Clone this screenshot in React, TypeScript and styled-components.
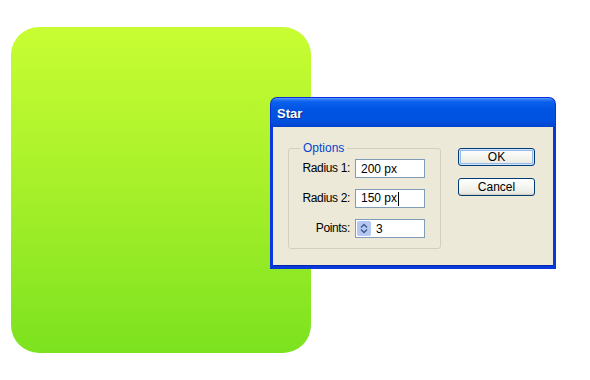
import React from "react";
import styled, { createGlobalStyle } from "styled-components";

const Global = createGlobalStyle`
  html, body { margin: 0; padding: 0; background: #ffffff; }
  body { font-family: "Liberation Sans", Arial, sans-serif; }
`;

const Page = styled.div`
  position: relative;
  width: 590px;
  height: 380px;
  padding: 27px 0 0 11px;
  box-sizing: border-box;
  background: #ffffff;
  overflow: hidden;
`;

const Card = styled.div`
  width: 300px;
  height: 326px;
  border-radius: 28px;
  background: linear-gradient(180deg, #c8fd33 0%, #a6f02a 50%, #7ce21f 100%);
`;

const Dialog = styled.div`
  position: absolute;
  left: 270px;
  top: 97px;
  width: 286px;
  height: 172px;
  display: flex;
  flex-direction: column;
  box-sizing: border-box;
`;

const TitleBar = styled.div`
  height: 30px;
  flex: none;
  box-sizing: border-box;
  border-radius: 7px 7px 0 0;
  border: 1px solid #0831d9;
  border-bottom: none;
  background: linear-gradient(
    180deg,
    #5d9bff 0%,
    #2a78f6 6%,
    #0a5fec 14%,
    #0054e3 40%,
    #0053e0 75%,
    #0049d6 92%,
    #0042c8 100%
  );
  display: flex;
  align-items: center;
  padding: 0 0 0 6px;
`;

const Title = styled.span`
  color: #ffffff;
  font-family: "Liberation Sans", Arial, sans-serif;
  font-weight: bold;
  font-size: 13px;
  text-shadow: 1px 1px 0 #0a2a8a;
  margin-top: 1px;
`;

const Client = styled.div`
  flex: 1;
  background: #ece9d8;
  border: 3px solid #0839d9;
  border-top: none;
  display: flex;
  align-items: flex-start;
  padding: 21px 0 0 15px;
  gap: 17px;
  box-shadow: inset 0 -1px 0 #0025b0;
`;

const GroupBox = styled.div`
  position: relative;
  width: 153px;
  height: 101px;
  box-sizing: border-box;
  border: 1px solid #d0d0bf;
  border-radius: 3px;
  display: grid;
  grid-template-columns: 61px 70px;
  grid-auto-rows: 19px;
  column-gap: 5px;
  row-gap: 11px;
  padding: 10px 0 0 0;
  align-content: start;
`;

const Legend = styled.span`
  position: absolute;
  left: 11px;
  top: -8px;
  padding: 0 3px;
  background: #ece9d8;
  color: #0046d5;
  font-size: 12px;
  line-height: 14px;
`;

const Label = styled.label`
  font-size: 12px;
  color: #000000;
  text-align: right;
  line-height: 19px;
  letter-spacing: -0.35px;
  white-space: nowrap;
`;

const Field = styled.div<{ $spin?: boolean }>`
  box-sizing: border-box;
  height: 19px;
  width: 70px;
  border: 1px solid #7f9db9;
  background: #ffffff;
  display: flex;
  align-items: center;
  padding-left: ${(p) => (p.$spin ? "1px" : "5px")};
  gap: 5px;
  font-size: 12px;
  color: #000000;
`;

const Caret = styled.span`
  display: inline-block;
  width: 1px;
  height: 14px;
  background: #000000;
  margin-left: 1px;
  vertical-align: middle;
`;

const Spinner = styled.span`
  width: 14px;
  height: 15px;
  border-radius: 2px;
  background: #b4c7f2;
  display: flex;
  align-items: center;
  justify-content: center;
`;

const Buttons = styled.div`
  display: flex;
  flex-direction: column;
  gap: 12px;
`;

const Button = styled.button<{ $default?: boolean }>`
  width: 77px;
  height: 18px;
  padding: 0;
  box-sizing: border-box;
  border: 1px solid #003c74;
  border-radius: 3px;
  background: linear-gradient(180deg, #ffffff 0%, #f7f7f3 40%, #ecebe3 85%, #d6d0c5 100%);
  font-family: "Liberation Sans", Arial, sans-serif;
  font-size: 12px;
  color: #000000;
  line-height: 15px;
  box-shadow: ${(p) =>
    p.$default
      ? "inset 0 0 0 1px #cee7ff, inset 0 0 0 2px #98b8ea"
      : "inset 0 -1px 0 #d6d0c5"};
`;

export default function App() {
  return (
    <>
      <Global />
      <Page>
        <Card />
        <Dialog>
          <TitleBar>
            <Title>Star</Title>
          </TitleBar>
          <Client>
            <GroupBox>
              <Legend>Options</Legend>
              <Label>Radius 1:</Label>
              <Field>200 px</Field>
              <Label>Radius 2:</Label>
              <Field>
                <span>
                  150 px
                  <Caret />
                </span>
              </Field>
              <Label>Points:</Label>
              <Field $spin>
                <Spinner>
                  <svg width="8" height="11" viewBox="0 0 8 11">
                    <path d="M1 4.5 L4 1.5 L7 4.5" fill="none" stroke="#3d5a8c" strokeWidth="1.4" />
                    <path d="M1 6.5 L4 9.5 L7 6.5" fill="none" stroke="#3d5a8c" strokeWidth="1.4" />
                  </svg>
                </Spinner>
                3
              </Field>
            </GroupBox>
            <Buttons>
              <Button $default>OK</Button>
              <Button>Cancel</Button>
            </Buttons>
          </Client>
        </Dialog>
      </Page>
    </>
  );
}
